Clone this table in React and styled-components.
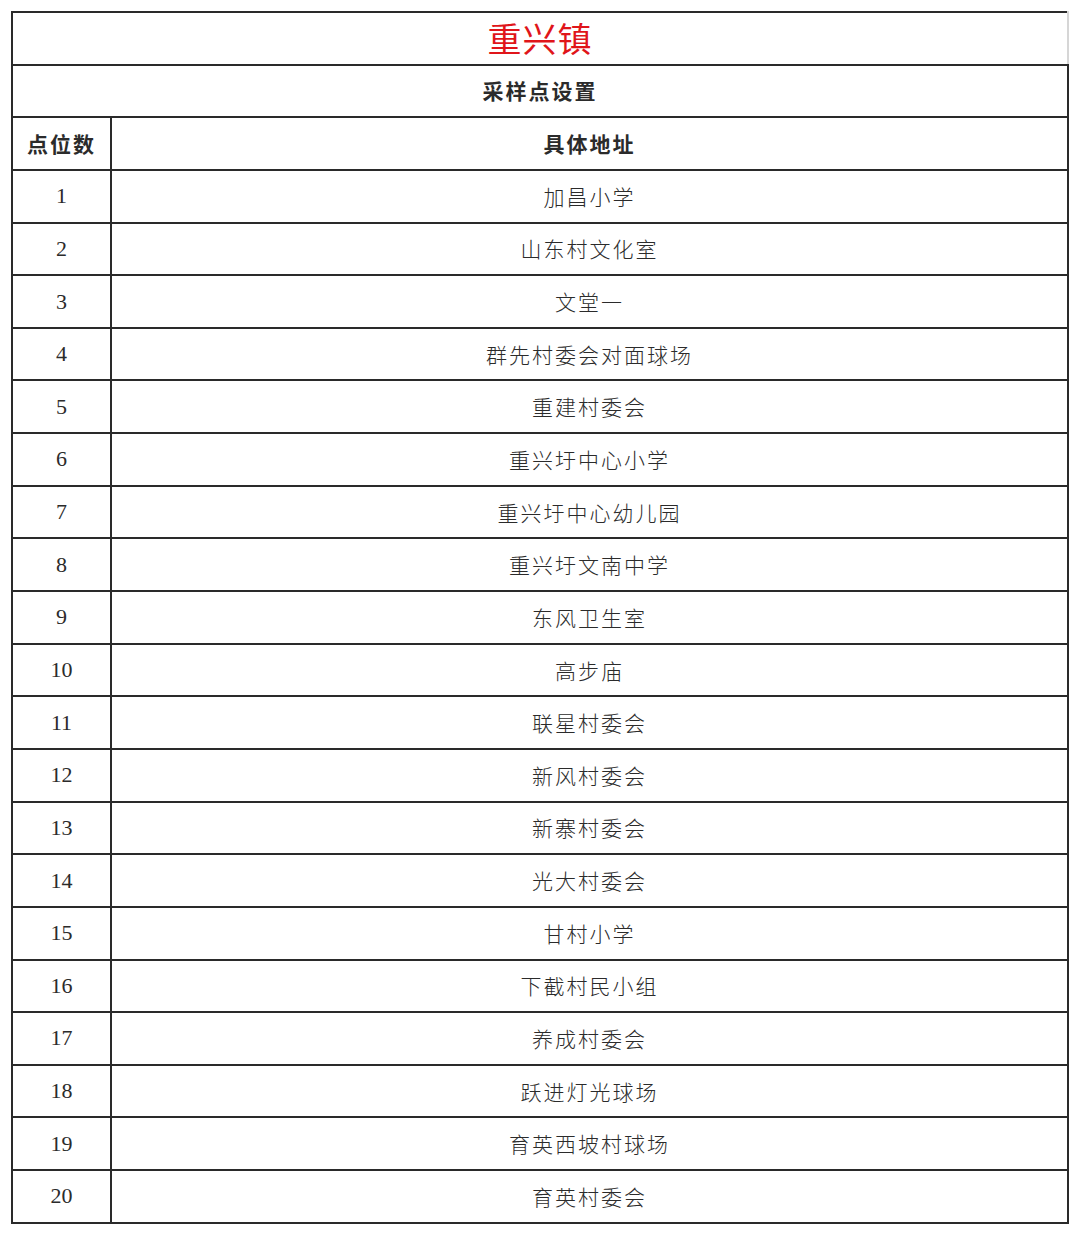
import React from 'react'
import styled, { createGlobalStyle } from 'styled-components'

const GlobalStyle = createGlobalStyle`
  body {
    margin: 0;
    background: #ffffff;
    font-family: "Noto Sans CJK SC", "Liberation Serif", sans-serif;
  }
`

const Page = styled.div`
  width: 1080px;
  height: 1234px;
  padding: 11px 0 0 11px;
  box-sizing: border-box;
  background: #fff;
`

const Table = styled.table`
  width: 1058px;
  border-collapse: collapse;
  table-layout: fixed;
  color: #2b2b2b;
`

const Cell = styled.td`
  height: 50.65px;
  padding: 0;
  border: 2px solid #2a2a2a;
  text-align: center;
  vertical-align: middle;
  font-family: ${p => (p.num ? '"Liberation Serif", "Noto Sans CJK SC", serif' : '"Noto Sans CJK SC", sans-serif')};
  font-size: ${p => (p.num ? '22px' : '21px')};
  font-weight: ${p => (p.bold ? 700 : 300)};
  letter-spacing: ${p => (p.num ? '0' : '2px')};
  line-height: 1;
`

const TitleCell = styled(Cell)`
  border-right-color: #d6d6d6;
  color: #e0151a;
  font-size: 34px;
  font-weight: 400;
  letter-spacing: 1px;
`

const rows = [
  '加昌小学',
  '山东村文化室',
  '文堂一',
  '群先村委会对面球场',
  '重建村委会',
  '重兴圩中心小学',
  '重兴圩中心幼儿园',
  '重兴圩文南中学',
  '东风卫生室',
  '高步庙',
  '联星村委会',
  '新风村委会',
  '新寨村委会',
  '光大村委会',
  '甘村小学',
  '下截村民小组',
  '养成村委会',
  '跃进灯光球场',
  '育英西坡村球场',
  '育英村委会',
]

export default function App() {
  return (
    <Page>
      <GlobalStyle />
      <Table>
        <colgroup>
          <col style={{ width: 99 }} />
          <col />
        </colgroup>
        <tbody>
          <tr>
            <TitleCell colSpan={2}>重兴镇</TitleCell>
          </tr>
          <tr>
            <Cell colSpan={2} bold>采样点设置</Cell>
          </tr>
          <tr>
            <Cell bold>点位数</Cell>
            <Cell bold>具体地址</Cell>
          </tr>
          {rows.map((name, i) => (
            <tr key={i}>
              <Cell num>{i + 1}</Cell>
              <Cell>{name}</Cell>
            </tr>
          ))}
        </tbody>
      </Table>
    </Page>
  )
}
